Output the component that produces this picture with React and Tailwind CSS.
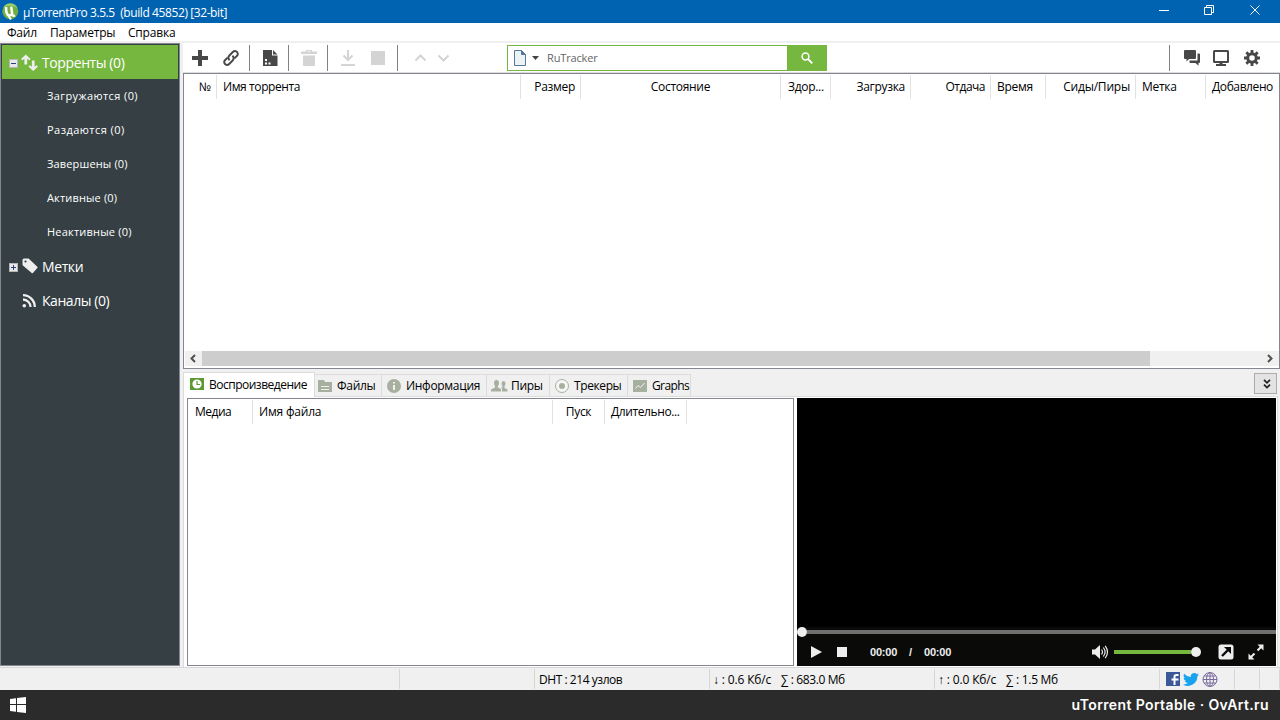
import React, { useState } from "react";

const columns = [
  { label: "№", className: "w-[31px] justify-end pr-[5px] tracking-[0px]" },
  { label: "Имя торрента", className: "w-[304px] pl-1.5 tracking-[-0.4px]" },
  { label: "Размер", className: "w-[60px] justify-end pr-[5px]" },
  { label: "Состояние", className: "w-[200px] justify-center" },
  { label: "Здор...", className: "w-[50px] pl-[7px]" },
  { label: "Загрузка", className: "w-[80px] justify-end pr-[5px]" },
  { label: "Отдача", className: "w-[80px] justify-end pr-[5px] tracking-[-0.5px]" },
  { label: "Время", className: "w-[55px] pl-1.5" },
  { label: "Сиды/Пиры", className: "w-[90px] justify-end pr-[5px] tracking-[-0.2px]" },
  { label: "Метка", className: "w-[70px] pl-1.5" },
];

const mediaColumns = [
  { label: "Медиа", className: "w-[65px] pl-[7px] tracking-[-0.5px]" },
  { label: "Имя файла", className: "w-[300px] pl-1.5 tracking-[-0.2px]" },
  { label: "Пуск", className: "w-[52px] justify-center" },
  { label: "Длительно...", className: "w-[82px] pl-1.5 tracking-[-0.4px]" },
];

const filters = [
  { label: "Загружаются (0)", className: "tracking-[0.4px]" },
  { label: "Раздаются (0)", className: "tracking-[0.45px]" },
  { label: "Завершены (0)", className: "tracking-[0.15px]" },
  { label: "Активные (0)", className: "tracking-[0.15px]" },
  { label: "Неактивные (0)", className: "tracking-[0.2px]" },
];

const Separator = ({ className = "" }) => (
  <div className={`h-[26px] w-px shrink-0 bg-[#828282] ${className}`} />
);

const TitleBar = () => (
  <header className="flex h-[23px] shrink-0 items-center bg-[#0063b1] text-white">
    <svg className="ml-0.5" width="17" height="17" viewBox="0 0 17 17">
      <circle cx="8.3" cy="8.3" r="8" fill="#6fae3f" />
      <path d="M1 5a8 8 0 0 1 14.5 0C11 2 5 2 1 5z" fill="#9bcb74" />
      <path
        d="M4.200 4.200c-.3 3 0 5.500 1.200 7.200 1.200 1.500 3.400 1.300 4.600-.3.500 1.600 1.700 2 3 1.300M9.300 3.600c.2 3.300.3 5.400 1 7.200"
        fill="none"
        stroke="#fff"
        strokeWidth="2.500"
      />
      <path d="M5.500 11.500l3.500 5" stroke="#fff" strokeWidth="2" />
    </svg>
    <span className="ml-1 whitespace-pre pt-0.5 text-[12px] tracking-[-0.41px]">
      µTorrentPro 3.5.5{"  "}(build 45852) [32-bit]
    </span>
    <svg className="ml-auto mr-[15px]" width="106" height="23" viewBox="0 0 106 23" fill="none" stroke="#fff">
      <path d="M0 10.500h10" />
      <path d="M45.500 7.500h7v7h-7zM47.500 7.500v-2h7v7h-2" />
      <path d="M91.500 5.500l9 9M100.500 5.500l-9 9" />
    </svg>
  </header>
);

const MenuBar = () => (
  <nav className="flex h-5 shrink-0 items-center border-b-2 border-[#f0f0f0] bg-white pt-0.5 text-[12px] tracking-[-0.2px]">
    <span className="ml-[7px] w-[43px]">Файл</span>
    <span className="w-[78px]">Параметры</span>
    <span>Справка</span>
  </nav>
);

const TreeToggle = ({ open }) => (
  <svg width="9" height="9" viewBox="0 0 9 9">
    <rect x=".5" y=".5" width="8" height="8" fill="#e9e9e9" stroke="#b5b5b5" />
    <path d={open ? "M2 4.500h5" : "M2 4.500h5M4.500 2v5"} stroke="#2c4080" />
  </svg>
);

const Sidebar = () => {
  const [selected, setSelected] = useState("torrents");

  return (
    <aside className="h-[623px] w-[180px] shrink-0 border border-[#828790] bg-[#353f44] p-px text-white">
      <div
        onClick={() => setSelected("torrents")}
        className={`flex h-[34px] items-center pl-[7px] pt-0.5 ${selected === "torrents" ? "bg-[#76b83f]" : ""}`}
      >
        <TreeToggle open />
        <svg className="-mt-0.5 ml-[3px]" width="17" height="17" viewBox="0 0 16 17" preserveAspectRatio="none" fill="#eee">
          <path d="M4.500.500L9 5 7.700 6.300 5.800 4.800V10.500H3.200V4.800L1.300 6.300 0 5z" />
          <path d="M11.500 17L7 12.500 8.300 11.200 10.200 12.700V6.500H12.800V12.700L14.700 11.200 16 12.500z" />
        </svg>
        <span className="ml-1 text-[14px] tracking-[-0.4px]">Торренты (0)</span>
      </div>
      {filters.map((item) => (
        <div
          key={item.label}
          onClick={() => setSelected(item.label)}
          className={`flex h-[34px] items-center pb-0.5 pl-[45px] text-[11px] ${item.className} ${selected === item.label ? "bg-[#76b83f]" : ""}`}
        >
          {item.label}
        </div>
      ))}
      <div className="flex h-[34px] items-center pl-[7px] pt-0.5">
        <TreeToggle />
        <svg className="-mt-0.5 ml-1" width="16" height="16" viewBox="0 0 16 16">
          <path
            d="M.5 2Q.5.500 2 .5h4.600l8.700 8.200q.6.700 0 1.400l-4.400 4.900q-.6.600-1.200 0L.9 7.500Q.5 7 .5 6.400z"
            fill="#eee"
          />
          <circle cx="3.500" cy="3.500" r="1.100" fill="#353f44" />
        </svg>
        <span className="ml-1 text-[14px] tracking-[-0.4px]">Метки</span>
      </div>
      <div className="flex h-[34px] items-center pl-5 pt-0.5">
        <svg width="14" height="14" viewBox="0 0 14 14" fill="none" stroke="#eee">
          <circle cx="2.300" cy="11.700" r="1.800" fill="#eee" stroke="none" />
          <path d="M1 5.500A7.500 7.500 0 0 1 8.500 13M1 1.200A11.800 11.800 0 0 1 12.800 13" strokeWidth="2.300" />
        </svg>
        <span className="ml-1.5 text-[14px] tracking-[-0.44px]">Каналы (0)</span>
      </div>
    </aside>
  );
};

const SearchBox = () => (
  <div className="flex h-[26px] w-[320px] shrink-0 items-center border border-[#76b83f] bg-white">
    <svg className="ml-1.5" width="26" height="16" viewBox="0 0 26 16">
      <path d="M.5.500h7l4 4v11H.5z" fill="#edf2f5" stroke="#55779b" />
      <path d="M7.500.500v4h4z" fill="#55779b" stroke="#55779b" />
      <path d="M18 6h7l-3.500 4z" fill="#444" />
    </svg>
    <span className="ml-[7px] text-[11px] tracking-[-0.15px] text-[#666]">RuTracker</span>
    <button className="-my-px -mr-px ml-auto flex h-[26px] w-10 items-center justify-center bg-[#76b83f]">
      <svg width="12" height="12" viewBox="0 0 12 12" fill="none" stroke="#fff">
        <circle cx="4.500" cy="4.500" r="3.400" strokeWidth="1.500" />
        <path d="M7 7l4.300 4.300" strokeWidth="1.800" />
      </svg>
    </button>
  </div>
);

const Toolbar = () => (
  <div className="flex h-[30px] shrink-0 items-center border-b border-[#dcdcdc] bg-white">
    <svg className="ml-[9px]" width="16" height="16" viewBox="0 0 16 16">
      <path d="M8 0v16M0 8h16" stroke="#484848" strokeWidth="4" />
    </svg>
    <svg className="ml-[15px]" width="16" height="16" viewBox="0 0 16 16" fill="none" stroke="#484848" strokeWidth="1.900">
      <path d="M6.600 10.200C5.100 8.800 5.200 6.800 6.400 5.500L9.800 2c1.400-1.400 3.200-1.300 4.300.1 1 1.300.8 2.800-.3 3.900L11.400 8.400" />
      <path d="M9.400 5.800c1.500 1.400 1.400 3.400.2 4.700L6.200 14c-1.400 1.400-3.200 1.300-4.300-.1-1-1.300-.8-2.800.3-3.900L4.600 7.600" />
    </svg>
    <Separator className="ml-[10px]" />
    <svg className="ml-[13px]" width="15" height="16" viewBox="0 0 15 16">
      <path d="M0 0h9v5.500h5.500V16H0zM10 0l4.500 4.500H10z" fill="#484848" />
      <path d="M2 9h2v2H2zM2 12.500h2v2H2zM5.500 12.500h2v2h-2z" fill="#fff" />
    </svg>
    <Separator className="ml-[10px]" />
    <svg className="ml-3" width="16" height="16" viewBox="0 0 16 16" fill="#d4d4d4">
      <path d="M0 1.500h5V0h6v1.500h5V4H0zM2 5.500h12V15q0 1-1 1H3q-1 0-1-1zM6.500 1.200v.8h3v-.8z" fillRule="evenodd" />
    </svg>
    <Separator className="ml-[10px]" />
    <svg className="ml-[13px]" width="14" height="16" viewBox="0 0 14 16" fill="none" stroke="#d4d4d4" strokeWidth="2">
      <path d="M7 0v10M2.500 5.500L7 10l4.500-4.500M0 15h14" />
    </svg>
    <div className="ml-4 size-[14px] bg-[#d4d4d4]" />
    <Separator className="ml-3" />
    <svg className="ml-4" width="36" height="8" viewBox="0 0 36 8" fill="none" stroke="#d4d4d4" strokeWidth="2">
      <path d="M1.500 6.500l5-5 5 5M24.500 1.500l5 5 5-5" />
    </svg>
    <div className="ml-[57px]">
      <SearchBox />
    </div>
    <Separator className="ml-auto" />
    <svg className="ml-[14px]" width="17" height="16" viewBox="0 0 17 16" fill="#484848">
      <path d="M1 0h10q1 0 1 1v7q0 1-1 1H5L2.500 11.500V9H1Q0 9 0 8V1q0-1 1-1z" />
      <path d="M13.500 3.500H15q1 0 1 1V12q0 1-1 1h-.5v2.800L11.500 13h-5q-1 0-1-1v-1.500h8z" />
    </svg>
    <svg className="ml-3" width="16" height="16" viewBox="0 0 16 16">
      <rect x="1" y="1" width="14" height="11" rx=".5" fill="none" stroke="#484848" strokeWidth="2" />
      <path d="M6.500 12h3v2H13v2H3v-2h3.500z" fill="#484848" />
    </svg>
    <svg className="ml-[15px] mr-5" width="16" height="16" viewBox="0 0 16 16" fill="none" stroke="#484848">
      <circle cx="8" cy="8" r="4.300" strokeWidth="3" />
      <path
        d="M8 0v3M8 13v3M0 8h3M13 8h3M2.340 2.340l2.100 2.100M11.500 11.500l2.160 2.160M13.660 2.340l-2.100 2.100M4.500 11.500l-2.160 2.160"
        strokeWidth="2.800"
      />
    </svg>
  </div>
);

const HeaderRow = ({ items, children }) => (
  <div className="flex h-[25px] shrink-0 pt-px text-[12px] tracking-[-0.3px]">
    {items.map((col) => (
      <div key={col.label} className={`flex shrink-0 items-center border-r border-[#e2e2e2] ${col.className}`}>
        {col.label}
      </div>
    ))}
    {children}
  </div>
);

const TorrentList = () => (
  <section className="flex h-[296px] shrink-0 flex-col border border-[#828790] bg-white">
    <div className="flex min-h-0 flex-1 flex-col pl-0.5">
      <HeaderRow items={columns}>
        <div className="flex items-center pl-1.5 tracking-[-0.4px]">Добавлено</div>
      </HeaderRow>
    </div>
    <div className="mb-[2px] ml-px flex h-[15px] shrink-0 bg-[#f0f0f0]">
      <svg width="17" height="15" viewBox="0 0 17 15" fill="none" stroke="#505050" strokeWidth="2">
        <path d="M10 4L6.500 7.500 10 11" />
      </svg>
      <div className="w-[948px] bg-[#cdcdcd]" />
      <svg className="ml-auto" width="17" height="15" viewBox="0 0 17 15" fill="none" stroke="#505050" strokeWidth="2">
        <path d="M6 4l3.500 3.500L6 11" />
      </svg>
    </div>
  </section>
);

const FileIcon = () => (
  <svg width="14" height="12" viewBox="0 0 14 12">
    <path d="M0 0h6l1 2h7v10H0z" fill="#a7b09f" />
    <path d="M3 6.500h8M3 9.500h8" stroke="#f0f0f0" />
  </svg>
);

const InfoIcon = () => (
  <svg width="14" height="14" viewBox="0 0 14 14">
    <circle cx="7" cy="7" r="7" fill="#a7b09f" />
    <path d="M6 3h2v1.500H6zM6 6h2v5H6z" fill="#f0f0f0" />
  </svg>
);

const PeersIcon = () => (
  <svg width="17" height="12" viewBox="0 0 17 12" fill="#a7b09f">
    <path d="M5.500 0q2.500 0 2.500 3Q8 5 6.800 6v1.500L10 9v2.500H0V9.500l4-2V6Q3 5 3 3q0-3 2.500-3z" />
    <path d="M12.500 1q2 0 2 2.500 0 1.500-1 2.500v2l3 1.500v2H11V8.500L9.500 7.500h2V6q-1-1-1-2.500 0-2.500 2-2.500z" />
  </svg>
);

const TrackerIcon = () => (
  <svg width="14" height="14" viewBox="0 0 14 14">
    <circle cx="7" cy="7" r="6.500" fill="#f6f6f6" stroke="#a7b09f" />
    <circle cx="7" cy="7" r="3" fill="#a7b09f" />
  </svg>
);

const GraphIcon = () => (
  <svg width="14" height="12" viewBox="0 0 14 12">
    <path d="M0 0h14v12H0z" fill="#a7b09f" />
    <path d="M2.500 8.500l2.500-3 2.500 2L11.500 3" fill="none" stroke="#f0f0f0" />
  </svg>
);

const tabs = [
  { label: "Файлы", icon: <FileIcon />, className: "w-[67px] pl-[3px] gap-[5px]" },
  { label: "Информация", icon: <InfoIcon />, className: "w-[105px] pl-[5px] gap-[5px]" },
  { label: "Пиры", icon: <PeersIcon />, className: "w-[63px] pl-1 gap-[3px]" },
  { label: "Трекеры", icon: <TrackerIcon />, className: "w-[78px] pl-[5px] gap-[5px] tracking-[-0.4px]" },
  { label: "Graphs", icon: <GraphIcon />, className: "w-[63px] pl-[5px] gap-[5px] tracking-[-0.6px]" },
];

const TabStrip = () => (
  <div className="flex h-7 shrink-0 items-end text-[12px] tracking-[-0.3px]">
    <div className="flex h-[25px] w-[132px] shrink-0 items-center border border-b-0 border-[#dcdcdc] bg-white pb-px pl-1.5">
      <svg className="-mt-px" width="14" height="12" viewBox="0 0 14 12">
        <path d="M0 0h14v12H0z" fill="#5b9a35" />
        <circle cx="7" cy="6" r="4.600" fill="#fff" />
        <path d="M7 3v3.500h3" fill="none" stroke="#5b9a35" strokeWidth="1.200" />
      </svg>
      <span className="ml-[5px] tracking-[-0.5px]">Воспроизведение</span>
    </div>
    <div className="flex h-[23px] flex-1 border-b border-[#dcdcdc]">
      {tabs.map((tab) => (
        <div key={tab.label} className={`flex h-[22px] items-center border-r border-t border-[#dcdcdc] ${tab.className}`}>
          {tab.icon}
          <span>{tab.label}</span>
        </div>
      ))}
      <button className="-mt-px ml-auto mr-px flex h-[21px] w-[23px] items-center justify-center border border-[#acacac] bg-[#e3e3e3]">
        <svg className="ml-0.5" width="8" height="10" viewBox="0 0 8 10" fill="none" stroke="#222" strokeWidth="1.800">
          <path d="M1 .8l3 3 3-3M1 5.600l3 3 3-3" />
        </svg>
      </button>
    </div>
    <div className="w-0.5" />
  </div>
);

const Player = () => {
  const [playing, setPlaying] = useState(false);

  return (
    <section className="ml-[3px] flex w-[479px] shrink-0 flex-col bg-black">
      <div className="flex-1" />
      <div className="flex h-[10px] items-center bg-[#0a0a08]">
        <div className="size-[10px] rounded-full bg-[#eee]" />
        <div className="h-1 flex-1 bg-[#707070]" />
      </div>
      <div className="flex h-[29px] items-center bg-[#0a0a08] pt-px text-[#eee]">
        <svg className="ml-[14px]" width="11" height="12" viewBox="0 0 11 12" onClick={() => setPlaying(!playing)}>
          <path d={playing ? "M0 0h4v12H0zM7 0h4v12H7z" : "M0 0l11 6-11 6z"} fill="#eee" />
        </svg>
        <div className="ml-[15px] size-[10px] bg-[#eee]" />
        <div className="ml-[23px] flex font-['Liberation_Sans',sans-serif] text-[11px] font-bold tracking-[-0.2px]">
          <span className="w-[39px]">00:00</span>
          <span className="w-[15px]">/</span>
          <span>00:00</span>
        </div>
        <svg className="ml-auto" width="17" height="14" viewBox="0 0 17 14" fill="none" stroke="#eee">
          <path d="M0 4.500h3L8 0v14L3 9.500H0z" fill="#eee" stroke="none" />
          <path d="M9.500 4.500q2 2.500 0 5M11.300 2.500q3.600 4.500 0 9M13.200.800q4.600 6.200 0 12.400" strokeWidth="1.200" />
        </svg>
        <div className="ml-[5px] h-1 w-[77px] bg-[#76b83f]" />
        <div className="size-[10px] rounded-full bg-[#eee]" />
        <svg className="ml-[17px]" width="16" height="16" viewBox="0 0 16 16">
          <rect x=".5" y=".5" width="15" height="15" rx="2.500" fill="#eee" />
          <path d="M4 12l6-6" stroke="#0a0a08" strokeWidth="2.400" />
          <path d="M6 3h7v7z" fill="#0a0a08" />
        </svg>
        <svg className="ml-[14px] mr-3" width="16" height="16" viewBox="0 0 16 16" fill="#eee" stroke="#eee">
          <path d="M9.500 6.500L13 3M6.500 9.500L3 13" strokeWidth="2" />
          <path d="M9.500.500h6v6zM.5 9.500v6h6z" stroke="none" />
        </svg>
      </div>
    </section>
  );
};

const DetailsPanel = () => (
  <div className="mr-0.5 flex h-[270px] shrink-0 border-x border-[#dcdcdc] bg-white pb-px pl-[3px] pt-px">
    <section className="w-[607px] shrink-0 border border-[#828790]">
      <HeaderRow items={mediaColumns} />
    </section>
    <Player />
  </div>
);

const StatusBar = () => (
  <footer className="flex h-[23px] shrink-0 border-t border-[#d7d7d7] bg-[#f0f0f0] py-px text-[12px] tracking-[-0.3px]">
    <div className="w-[400px] border-r border-[#d7d7d7]" />
    <div className="w-[135px] border-r border-[#d7d7d7]" />
    <div className="flex w-[175px] items-center border-r border-[#d7d7d7] pl-1 pt-0.5 tracking-[-0.45px]">DHT : 214 узлов</div>
    <div className="flex w-[225px] items-center border-r border-[#d7d7d7] pl-[3px] pt-0.5">
      <span className="w-[68px] tracking-[-0.15px]">↓ : 0.6 Кб/с</span>
      <span className="tracking-[-0.4px]">∑ : 683.0 Мб</span>
    </div>
    <div className="flex w-[225px] items-center border-r border-[#d7d7d7] pl-[3px] pt-0.5">
      <span className="w-[68px] tracking-[-0.15px]">↑ : 0.0 Кб/с</span>
      <span>∑ : 1.5 Мб</span>
    </div>
    <div className="flex w-[75px] items-center gap-1 border-r border-[#d7d7d7] pl-1.5">
      <svg width="14" height="14" viewBox="0 0 14 14">
        <path d="M0 0h14v14H0z" fill="#3b5998" />
        <path d="M8.500 13V4.700Q8.500 3 10.500 3h2M5.500 7.500h7" fill="none" stroke="#fff" strokeWidth="2" />
      </svg>
      <svg className="-ml-px" width="16" height="13" viewBox="0 0 24 20" preserveAspectRatio="none">
        <path
          d="M24 2.400a10 10 0 0 1-2.800.8A5 5 0 0 0 23.300.500a10 10 0 0 1-3.100 1.200 4.900 4.900 0 0 0-8.400 4.500A14 14 0 0 1 1.700 1.100a4.900 4.900 0 0 0 1.500 6.500 5 5 0 0 1-2.200-.6 4.900 4.900 0 0 0 3.900 4.900 5 5 0 0 1-2.200.1 4.900 4.900 0 0 0 4.600 3.400A10 10 0 0 1 0 17.500 14 14 0 0 0 21.500 5a10 10 0 0 0 2.500-2.600z"
          fill="#18a3ee"
        />
      </svg>
      <svg className="-ml-px" width="16" height="15" viewBox="0 0 16 15" fill="none" stroke="#7a6a9c">
        <ellipse cx="8" cy="7.500" rx="7" ry="6.900" />
        <ellipse cx="8" cy="7.500" rx="3.500" ry="6.900" />
        <path d="M8 .5v14M1 7.500h14M2.200 4h11.600M2.200 11h11.600" />
      </svg>
    </div>
    <div className="w-[25px] border-r border-[#d7d7d7]" />
    <div className="w-5 border-r border-[#d7d7d7]" />
  </footer>
);

const Taskbar = () => (
  <div className="flex h-[30px] shrink-0 items-center bg-[#2b2b2b] text-white">
    <svg className="ml-[10px]" width="16" height="16" viewBox="0 0 16 16" fill="#fff">
      <path d="M0 2l6-.8V7H0zM7 1l9-1v7H7zM0 8h6v6.700L0 14zM7 8h9v8l-9-1z" />
    </svg>
    <span className="ml-auto mr-[11px] font-['Inter',sans-serif] text-[14px] font-semibold tracking-[0.38px]">
      uTorrent Portable · OvArt.ru
    </span>
  </div>
);

const App = () => {
  return (
    <div className="flex h-[720px] w-[1280px] flex-col overflow-hidden whitespace-nowrap bg-[#f0f0f0] font-['Open_Sans','Noto_Sans',sans-serif] leading-none text-black">
      <TitleBar />
      <MenuBar />
      <div className="flex h-[624px] shrink-0">
        <Sidebar />
        <main className="ml-[3px] flex min-w-0 flex-1 flex-col">
          <Toolbar />
          <TorrentList />
          <TabStrip />
          <DetailsPanel />
        </main>
      </div>
      <StatusBar />
      <Taskbar />
    </div>
  );
};

export default App;
